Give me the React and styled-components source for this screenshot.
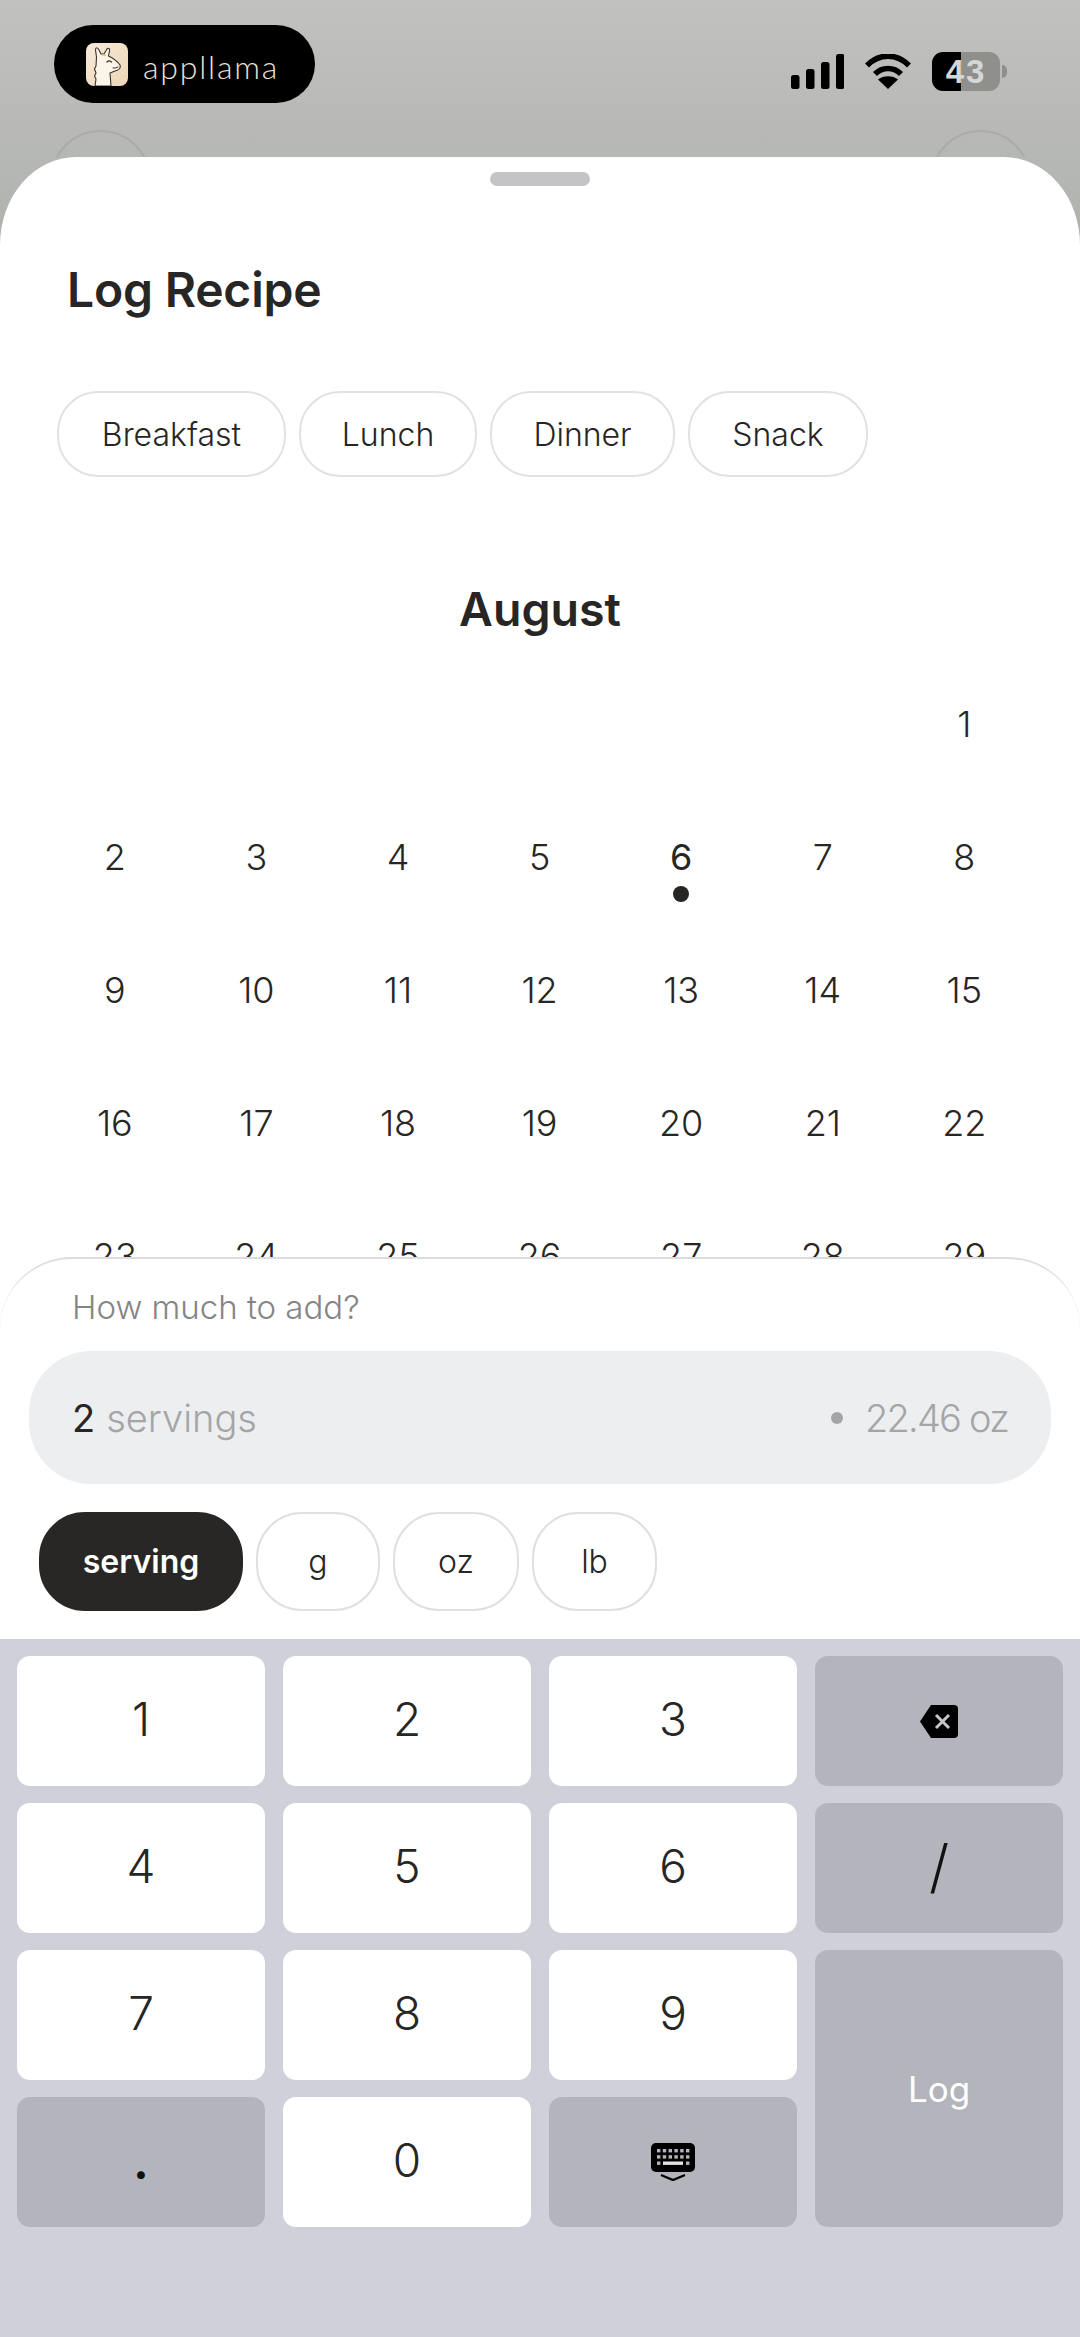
import styled, { createGlobalStyle } from 'styled-components'

const GlobalStyle = createGlobalStyle`
    html, body {
        margin: 0;
        padding: 0;
        background: #fff;
    }
    * {
        box-sizing: border-box;
    }
`

const Screen = styled.div`
    width: 1080px;
    height: 2337px;
    display: flex;
    flex-direction: column;
    overflow: hidden;
    font-family: Inter, "Liberation Sans", sans-serif;
    color: #272625;
    background: linear-gradient(#c1c2bf, #aeb0ac 270px, #fff 270px);
`

const Header = styled.header`
    height: 157px;
    flex-shrink: 0;
    overflow: hidden;
    padding: 25px 80px 0 54px;
`

const StatusRow = styled.div`
    display: flex;
    justify-content: space-between;
    align-items: center;
    height: 78px;
`

const AppPill = styled.div`
    width: 261px;
    height: 78px;
    border-radius: 39px;
    background: #000;
    display: flex;
    align-items: center;
    gap: 15px;
    padding-left: 32px;
`

const AppName = styled.span`
    font-family: Lato, sans-serif;
    font-weight: 300;
    font-size: 32px;
    letter-spacing: 1.8px;
    color: #ebe2d4;
    position: relative;
    top: 2px;
`

const StatusIcons = styled.div`
    display: flex;
    align-items: center;
    margin-top: 15px;
    gap: 21px;
`

const Battery = styled.div`
    width: 68px;
    height: 39px;
    border-radius: 11px;
    background: linear-gradient(90deg, #000 ${p => p.$level}%, #8f908e ${p => p.$level}%);
    color: #d6d6d4;
    font-family: "Liberation Sans", sans-serif;
    font-weight: 700;
    font-size: 33px;
    letter-spacing: 2px;
    display: flex;
    align-items: center;
    justify-content: center;
    position: relative;
    &::after {
        content: '';
        position: absolute;
        right: -7px;
        top: 13px;
        width: 5px;
        height: 13px;
        border-radius: 0 5px 5px 0;
        background: #8f908e;
    }
`

const NavRow = styled.div`
    display: flex;
    justify-content: space-between;
    margin: 27px -31px 0 -4px;
`

const NavButton = styled.div`
    width: 101px;
    height: 101px;
    border-radius: 50%;
    border: 2px solid rgba(0, 0, 0, 0.07);
`

const Sheet = styled.section`
    height: 1100px;
    flex-shrink: 0;
    overflow: hidden;
    background: #fff;
    border-radius: 76px 76px 0 0 / 88px 88px 0 0;
    padding-top: 15px;
`

const Handle = styled.div`
    width: 100px;
    height: 14px;
    margin: 0 auto;
    border-radius: 7px;
    background: #c4c4c6;
`

const Title = styled.h1`
    margin: 76px 0 0 67px;
    font-size: 48px;
    line-height: 56px;
    font-weight: 600;
    letter-spacing: -0.2px;
`

const MealRow = styled.div`
    display: flex;
    gap: 13px;
    margin: 73px 0 0 57px;
`

const MealChip = styled.div`
    height: 86px;
    width: ${p => p.$width}px;
    border: 2px solid #e2e2e2;
    border-radius: 41px;
    display: flex;
    align-items: center;
    justify-content: center;
    font-size: 32px;
    font-weight: 300;
`

const Month = styled.h2`
    margin: 105px 0 0;
    text-align: center;
    font-size: 46.5px;
    line-height: 54px;
    font-weight: 600;
`

const CalendarGrid = styled.div`
    display: grid;
    grid-template-columns: repeat(7, 141.6px);
    grid-auto-rows: 133px;
    margin: 21px 0 0 44px;
`

const Day = styled.div`
    grid-column-start: ${p => p.$start || 'auto'};
    position: relative;
    display: flex;
    align-items: center;
    justify-content: center;
    font-size: 36px;
    font-weight: ${p => (p.$marked ? 400 : 300)};
    ${p => p.$marked && `
        &::after {
            content: '';
            position: absolute;
            left: 62.5px;
            top: 96px;
            width: 16px;
            height: 16px;
            border-radius: 50%;
            background: #272625;
        }
    `}
`

const AmountPanel = styled.section`
    height: 382px;
    flex-shrink: 0;
    background: #fff;
    border-top: 2px solid #dcdcde;
    border-radius: 72px 72px 0 0;
    padding-top: 27px;
`

const Prompt = styled.div`
    margin-left: 72px;
    font-size: 33px;
    line-height: 42px;
    font-weight: 300;
    color: #858585;
`

const AmountField = styled.div`
    height: 133px;
    margin: 23px 29px 0;
    padding: 0 43px 0 43px;
    border-radius: 62px;
    background: #eceef0;
    display: flex;
    align-items: center;
    font-size: 38px;
    font-weight: 300;
    color: #a4a5a7;
`

const AmountValue = styled.span`
    color: #272625;
    margin-right: 11px;
    font-weight: 400;
`

const AmountDot = styled.span`
    width: 12px;
    height: 12px;
    border-radius: 50%;
    background: #a4a5a7;
    margin: 0 22px 0 auto;
`

const AmountWeight = styled.span`
    letter-spacing: -1.8px;
`

const UnitRow = styled.div`
    display: flex;
    gap: 13px;
    margin: 28px 0 0 39px;
`

const UnitChip = styled.div`
    height: 99px;
    width: ${p => p.$width}px;
    border-radius: 46px;
    border: 2px solid ${p => (p.$active ? '#282725' : '#e0e0e0')};
    background: ${p => (p.$active ? '#282725' : '#fff')};
    color: ${p => (p.$active ? '#fff' : '#272625')};
    font-weight: ${p => (p.$active ? 600 : 300)};
    font-size: 32px;
    display: flex;
    align-items: center;
    justify-content: center;
`

const Keyboard = styled.section`
    flex: 1;
    background: #cfd0d9;
    padding: 17px;
    display: grid;
    grid-template-columns: repeat(4, 248px);
    grid-template-rows: repeat(4, 130px);
    column-gap: 18px;
    row-gap: 17px;
`

const Key = styled.div`
    border-radius: 13px;
    background: ${p => (p.$dark ? '#b4b4bc' : '#fff')};
    grid-row: ${p => (p.$tall ? 'span 2' : 'auto')};
    color: ${p => p.$color || '#272625'};
    display: flex;
    align-items: center;
    justify-content: center;
    font-size: ${p => p.$size || 46}px;
    font-weight: ${p => p.$weight || 300};
    padding-bottom: ${p => p.$lift || 0}px;
`

function LlamaBadge() {
    return (
        <svg width="42" height="43" viewBox="0 0 42 43">
            <defs>
                <linearGradient id="badge" x1="0" y1="0" x2="1" y2="1">
                    <stop offset="0" stopColor="#f7e9d8" />
                    <stop offset="1" stopColor="#eed6b8" />
                </linearGradient>
            </defs>
            <rect width="42" height="43" rx="8" fill="url(#badge)" />
            <path
                d="M9 43 L10 36 L8.5 33 L10 30 L8.5 26 L10 23 L10.5 14 L9.5 7 C9.5 4 11.5 4 13 7 L15 11 L18 11 L21 6 C22.5 4.5 24 5.5 23.5 8 L22.5 13 C27 15 31 18 34 22 C35 25 33 27 29 28 L24 30 L25 43 Z"
                fill="#fbf4e8"
                stroke="#3d3227"
                strokeWidth="1.1"
                strokeLinejoin="round"
            />
            <path d="M21 19 q2.2 -2.4 4.4 0" fill="none" stroke="#3d3227" strokeWidth="1.2" strokeLinecap="round" />
            <path d="M27 25 q3 0.6 5 -1" fill="none" stroke="#3d3227" strokeWidth="1" strokeLinecap="round" />
            <path d="M16 12 q2 -2 4.5 0.5 q-2 1.6 -4.5 -0.5 Z" fill="#e6c65c" />
        </svg>
    )
}

function SignalIcon() {
    return (
        <svg width="53" height="35" viewBox="0 0 53 35">
            <rect x="0" y="21" width="8.5" height="14" rx="2.5" />
            <rect x="15" y="15" width="8.5" height="20" rx="2.5" />
            <rect x="30" y="8" width="8.5" height="27" rx="2.5" />
            <rect x="45" y="0" width="8.5" height="35" rx="2.5" />
        </svg>
    )
}

function WifiIcon() {
    return (
        <svg width="46" height="35" viewBox="0 0 46 35">
            <path d="M2 11.5 C14 -1 32 -1 44 11.5" fill="none" stroke="#000" strokeWidth="5.5" />
            <path d="M10 20 C17 12.5 29 12.5 36 20" fill="none" stroke="#000" strokeWidth="5.5" />
            <path d="M23 35 L13 25.5 C18 21 28 21 33 25.5 Z" />
        </svg>
    )
}

function BackspaceIcon() {
    return (
        <svg width="38" height="33" viewBox="0 0 38 33">
            <path d="M11 0 H34 Q38 0 38 4 V29 Q38 33 34 33 H11 L0 16.5 Z" />
            <path d="M16 10 L29 23 M29 10 L16 23" stroke="#c6c6ca" strokeWidth="3" />
        </svg>
    )
}

function KeyboardIcon() {
    const keys = []
    for (let row = 0; row < 2; row++) {
        for (let col = 0; col < 6; col++) {
            keys.push(<rect key={`${row}-${col}`} x={6 + col * 5.8} y={6 + row * 6.2} width="3.4" height="3.4" fill="#b4b4bc" />)
        }
    }
    return (
        <svg width="44" height="38" viewBox="0 0 44 38">
            <rect width="44" height="29" rx="5" />
            {keys}
            <rect x="6" y="18.5" width="3.4" height="3.4" fill="#b4b4bc" />
            <rect x="12" y="18.5" width="20" height="3.4" fill="#e4e4e8" />
            <rect x="35" y="18.5" width="3.4" height="3.4" fill="#b4b4bc" />
            <path d="M10 32 L22 37 L34 32" fill="none" stroke="#000" strokeWidth="2.4" />
        </svg>
    )
}

const meals = [
    { label: 'Breakfast', width: 229 },
    { label: 'Lunch', width: 178 },
    { label: 'Dinner', width: 185 },
    { label: 'Snack', width: 180 },
]

const units = [
    { label: 'serving', width: 204, active: true },
    { label: 'g', width: 124 },
    { label: 'oz', width: 126 },
    { label: 'lb', width: 125 },
]

const days = Array.from({ length: 31 }, (_, i) => i + 1)

export default function App() {
    return (
        <Screen>
            <GlobalStyle />
            <Header>
                <StatusRow>
                    <AppPill>
                        <LlamaBadge />
                        <AppName>appllama</AppName>
                    </AppPill>
                    <StatusIcons>
                        <SignalIcon />
                        <WifiIcon />
                        <Battery $level={43}>43</Battery>
                    </StatusIcons>
                </StatusRow>
                <NavRow>
                    <NavButton />
                    <NavButton />
                </NavRow>
            </Header>
            <Sheet>
                <Handle />
                <Title>Log Recipe</Title>
                <MealRow>
                    {meals.map(m => (
                        <MealChip key={m.label} $width={m.width}>{m.label}</MealChip>
                    ))}
                </MealRow>
                <Month>August</Month>
                <CalendarGrid>
                    {days.map(d => (
                        <Day key={d} $start={d === 1 ? 7 : null} $marked={d === 6}>{d}</Day>
                    ))}
                </CalendarGrid>
            </Sheet>
            <AmountPanel>
                <Prompt>How much to add?</Prompt>
                <AmountField>
                    <AmountValue>2</AmountValue>
                    servings
                    <AmountDot />
                    <AmountWeight>22.46 oz</AmountWeight>
                </AmountField>
                <UnitRow>
                    {units.map(u => (
                        <UnitChip key={u.label} $width={u.width} $active={u.active}>{u.label}</UnitChip>
                    ))}
                </UnitRow>
            </AmountPanel>
            <Keyboard>
                <Key $lift={5}>1</Key>
                <Key $lift={5}>2</Key>
                <Key $lift={5}>3</Key>
                <Key $dark><BackspaceIcon /></Key>
                <Key $lift={5}>4</Key>
                <Key $lift={5}>5</Key>
                <Key $lift={5}>6</Key>
                <Key $dark $size={58} $color="#111" $lift={5}>/</Key>
                <Key $lift={5}>7</Key>
                <Key $lift={5}>8</Key>
                <Key $lift={5}>9</Key>
                <Key $dark $tall $color="#fff" $size={35} $weight={400}>Log</Key>
                <Key $dark $size={46} $weight={700} $color="#111">.</Key>
                <Key $lift={5}>0</Key>
                <Key $dark><KeyboardIcon /></Key>
            </Keyboard>
        </Screen>
    )
}
